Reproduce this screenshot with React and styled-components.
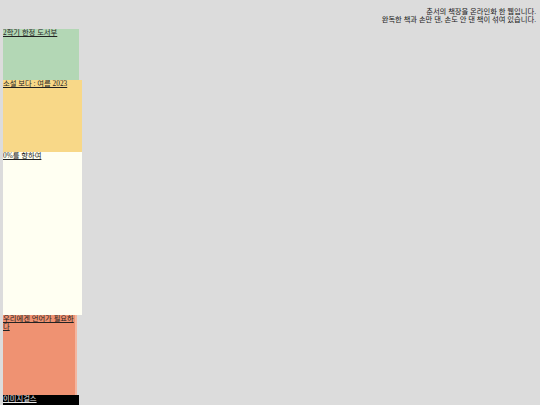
import React from 'react';
import styled, { createGlobalStyle } from 'styled-components';

const GlobalStyle = createGlobalStyle`
  html, body {
    margin: 0;
    padding: 0;
    background: #dcdcdc;
  }
  body {
    font-family: "Liberation Serif", "Noto Sans CJK KR", serif;
    color: #222;
  }
`;

const Page = styled.div`
  min-height: 405px;
  padding: 0 4px 0 3px;
  box-sizing: border-box;
`;

const Intro = styled.header`
  padding-top: 8px;
  text-align: right;
  font-size: 7.3px;
  line-height: 8px;
  color: #1a1a1a;
`;

const Shelf = styled.ul`
  display: flex;
  flex-direction: column;
  list-style: none;
  margin: 5px 0 0;
  padding: 0;
`;

const Book = styled.li`
  width: ${props => props.w}px;
  height: ${props => props.h}px;
  background: ${props => props.bg};
  border-right: ${props => (props.edge ? `2px solid ${props.edge}` : 'none')};
  font-size: 7.3px;
  line-height: 7.5px;
  overflow: hidden;

  a {
    color: ${props => props.ink || '#222'};
    text-decoration: underline;
  }
`;

const books = [
  { title: '2학기 한정 도서부', w: 76, h: 51, bg: '#b3d7b5' },
  { title: '소설 보다 : 여름 2023', w: 79, h: 72, bg: '#f8d888' },
  { title: '0%를 향하여', w: 79, h: 163, bg: '#fffff2' },
  { title: '우리에겐 언어가 필요하다', w: 72, h: 80, bg: '#ef9272', edge: '#f3b6a0' },
  { title: '이미지걸스', w: 76, h: 20, bg: '#000', ink: '#e8e8e8' },
];

const App = () => (
  <>
    <GlobalStyle />
    <Page>
      <Intro>
        춘서의 책장을 온라인화 한 웹입니다.
        <br />
        완독한 책과 손만 댄, 손도 안 댄 책이 섞여 있습니다.
      </Intro>
      <Shelf>
        {books.map(book => (
          <Book key={book.title} {...book}>
            <a href="#">{book.title}</a>
          </Book>
        ))}
      </Shelf>
    </Page>
  </>
);

export default App;
